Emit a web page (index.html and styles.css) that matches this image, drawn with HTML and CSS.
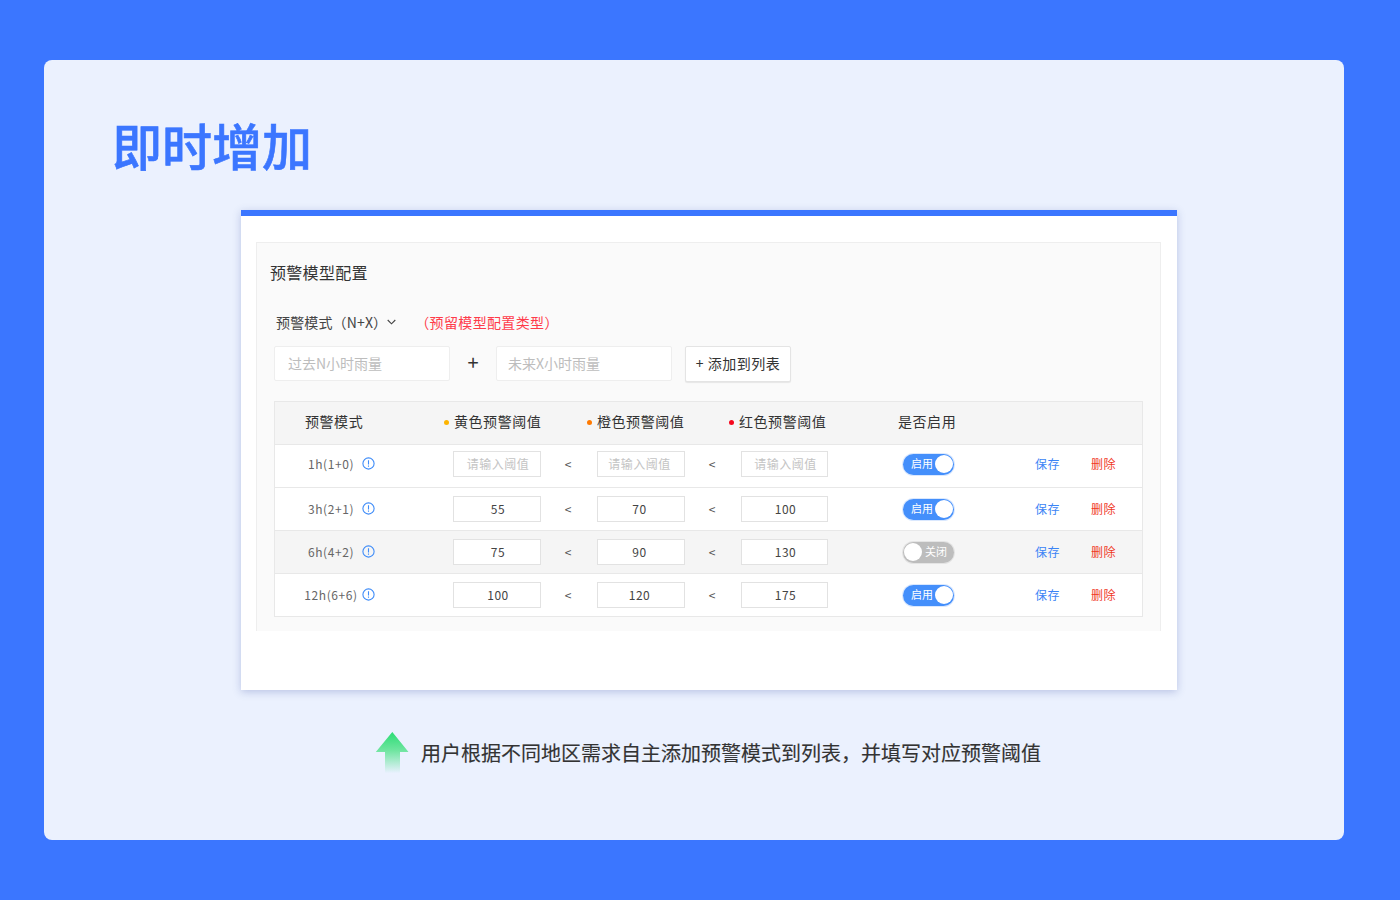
FILE: index.html
```html
<!DOCTYPE html>
<html lang="zh">
<head>
<meta charset="utf-8">
<title>即时增加</title>
<link rel="stylesheet" href="styles.css">
</head>
<body>
<main class="card">
  <h1 class="title">即时增加</h1>
  <section class="shot">
    <div class="panel">
      <h2 class="panel-title">预警模型配置</h2>
      <div class="mode-line">
        <span class="mode-select">预警模式（N+X）</span>
        <svg class="chev" width="9" height="6" viewBox="0 0 9 6"><path d="M.7 1l3.800 3.800L8.300 1" fill="none" stroke="#444" stroke-width="1.1"/></svg>
        <span class="mode-note">（预留模型配置类型）</span>
      </div>
      <div class="add-line">
        <div class="field">过去N小时雨量</div>
        <span class="plus">+</span>
        <div class="field field-x">未来X小时雨量</div>
        <button class="add-btn">+ 添加到列表</button>
      </div>
      <div class="table">
        <div class="thead">
          <span class="th-mode">预警模式</span>
          <span class="th"><i class="dot dot-y"></i>黄色预警阈值</span>
          <span class="th"><i class="dot dot-o"></i>橙色预警阈值</span>
          <span class="th"><i class="dot dot-r"></i>红色预警阈值</span>
          <span class="th">是否启用</span>
        </div>
        <div class="row row-first">
          <div class="mode"><span>1h(1+0)</span><svg class="info" viewBox="0 0 13 13"><circle cx="6.5" cy="6.5" r="5.6"/><path d="M6.5 3.2v4.2M6.5 8.6v1.2"/></svg></div>
          <div class="inp ph">请输入阈值</div><span class="lt">&lt;</span>
          <div class="inp ph">请输入阈值</div><span class="lt">&lt;</span>
          <div class="inp ph">请输入阈值</div>
          <div class="sw on"><span>启用</span><b></b></div>
          <a class="save">保存</a><a class="del">删除</a>
        </div>
        <div class="row">
          <div class="mode"><span>3h(2+1)</span><svg class="info" viewBox="0 0 13 13"><circle cx="6.5" cy="6.5" r="5.6"/><path d="M6.5 3.2v4.2M6.5 8.6v1.2"/></svg></div>
          <div class="inp">55</div><span class="lt">&lt;</span>
          <div class="inp">70</div><span class="lt">&lt;</span>
          <div class="inp">100</div>
          <div class="sw on"><span>启用</span><b></b></div>
          <a class="save">保存</a><a class="del">删除</a>
        </div>
        <div class="row row-off">
          <div class="mode"><span>6h(4+2)</span><svg class="info" viewBox="0 0 13 13"><circle cx="6.5" cy="6.5" r="5.6"/><path d="M6.5 3.2v4.2M6.5 8.6v1.2"/></svg></div>
          <div class="inp">75</div><span class="lt">&lt;</span>
          <div class="inp">90</div><span class="lt">&lt;</span>
          <div class="inp">130</div>
          <div class="sw off"><b></b><span>关闭</span></div>
          <a class="save">保存</a><a class="del">删除</a>
        </div>
        <div class="row">
          <div class="mode"><span>12h(6+6)</span><svg class="info" viewBox="0 0 13 13"><circle cx="6.5" cy="6.5" r="5.6"/><path d="M6.5 3.2v4.2M6.5 8.6v1.2"/></svg></div>
          <div class="inp">100</div><span class="lt">&lt;</span>
          <div class="inp">120</div><span class="lt">&lt;</span>
          <div class="inp">175</div>
          <div class="sw on"><span>启用</span><b></b></div>
          <a class="save">保存</a><a class="del">删除</a>
        </div>
      </div>
    </div>
  </section>
  <div class="caption">
    <svg class="arrow" width="34" height="42" viewBox="0 0 34 42">
      <defs><linearGradient id="ag" x1="0" y1="0" x2="0" y2="1"><stop offset="0" stop-color="#2bdc74"/><stop offset="0.45" stop-color="#6fe5a0"/><stop offset="1" stop-color="#e9f1fe"/></linearGradient></defs>
      <path d="M17.300 0L33.500 20H25V41H10V20H.8Z" fill="url(#ag)"/>
    </svg>
    <p>用户根据不同地区需求自主添加预警模式到列表，并填写对应预警阈值</p>
  </div>
</main>
</body>
</html>
```

FILE: styles.css
```css
* { box-sizing: border-box; }
html, body { margin: 0; height: 100%; }
body {
  width: 1400px; height: 900px; overflow: hidden;
  background: #3b76ff;
  padding: 60px 56px 60px 44px;
  font-family: "Noto Sans CJK SC", "Noto Sans", sans-serif;
  color: #333;
}
.card {
  width: 1300px; height: 780px;
  background: #ebf1fe;
  border-radius: 8px;
  padding-top: 47px;
}
.title {
  margin: 0 0 0 68px;
  font-size: 50px; line-height: 74px; font-weight: 500;
  -webkit-text-stroke: .6px #3b76ff;
  color: #3b76ff;
}
.shot {
  margin: 29px 0 0 197px;
  width: 936px; height: 480px;
  background: #fff;
  border-top: 6px solid #3b76ff;
  box-shadow: 0 2px 8px rgba(70, 90, 170, .3);
  padding: 26px 16px 0 15px;
}
.panel {
  height: 389px;
  background: #fafafa;
  border: 1px solid #eee;
  border-bottom: 0;
  padding: 0 17px;
}
.panel-title {
  margin: 0 0 0 -4px;
  padding-top: 17px;
  font-size: 16px; line-height: 24px; font-weight: 400;
  letter-spacing: .3px; color: #333;
}
.mode-line {
  display: flex; align-items: center;
  margin: 27px 0 0 2px; height: 22px;
  font-size: 14px; color: #444;
}
.mode-note { color: #ff3b4a; margin-left: 19px; letter-spacing: .35px; }
.chev { margin-left: 0; }
.mode-select { white-space: nowrap; letter-spacing: .15px; }
.add-line { display: flex; align-items: flex-start; margin-top: 13px; height: 36px; }
.field {
  width: 176px; height: 35px;
  background: #fff; border: 1px solid #eee; border-radius: 2px;
  padding-left: 13px;
  font-size: 14px; line-height: 33px; color: #bdbdbd;
}
.field-x { padding-left: 11px; }
.plus { width: 46px; text-align: center; font-size: 20px; line-height: 32px; color: #333; }
.add-btn {
  margin-left: 13px;
  width: 106px; height: 36px;
  background: #fff; border: 1px solid #e4e4e4; border-radius: 2px;
  font: 14px "Noto Sans CJK SC", sans-serif; letter-spacing: .5px; color: #333; padding: 0 0 2px;
  box-shadow: 0 1px 1px rgba(0,0,0,.08);
}
.table {
  margin-top: 19px;
  width: 869px; height: 216px;
  border: 1px solid #e8e8e8;
  background: #fff;
}
.thead {
  display: grid;
  grid-template-columns: 139px 143px 142px 169px auto;
  padding: 0 0 5px 30px;
  align-items: center;
  height: 42px;
  background: #f5f5f5;
  font-size: 14px; letter-spacing: .55px; color: #333;
}
.th { white-space: nowrap; }
.dot { display: inline-block; width: 5px; height: 5px; border-radius: 50%; margin-right: 5px; vertical-align: 2px; }
.dot-y { background: #fdb400; }
.dot-o { background: #ff7a00; }
.dot-r { background: #f5071d; }
.row {
  display: grid;
  grid-template-columns: 178px 88px 56px 88px 56px 87px 75px 51px 81px 25px 31px 26px;
  align-items: center;
  height: 43px;
  border-top: 1px solid #e8e8e8;
  font-size: 12px; color: #666;
}
.row-first { padding-bottom: 4px; }
.row-off { background: #f5f5f5; }
.mode { display: flex; align-items: center; padding-left: 25px; margin-bottom: 2px; letter-spacing: .6px; color: #666; }
.mode span { width: 62px; text-align: center; white-space: nowrap; }
.info { width: 13px; height: 13px; flex: none; fill: none; stroke: #3f8cf8; stroke-width: 1.1; }
.inp {
  height: 26px;
  background: #fff; border: 1px solid #e2e2e2;
  text-align: center; line-height: 24px; letter-spacing: .5px; color: #444;
}
.inp:nth-of-type(2) { padding-left: 2px; }
.inp:nth-of-type(3) { padding-right: 3px; }
.inp:nth-of-type(4) { padding-left: 2px; }
.ph { color: #c4c4c4; }
.lt { text-align: center; color: #555; padding-right: 2px; margin-bottom: 2px; }
.sw {
  grid-column: 8;
  width: 51px; height: 21px; border-radius: 11px;
  display: flex; align-items: center; justify-content: space-between;
  font-size: 11px; color: #fff;
  box-shadow: 0 0 0 1px rgba(70,140,250,.2);
}
.sw b { width: 18px; height: 18px; border-radius: 50%; background: #fff; flex: none; }
.sw.on { background: #448ffb; padding: 0 1px 0 8px; }
.sw.off { background: #bdbdbd; padding: 0 7px 0 1px; box-shadow: 0 0 0 1px #e4e4e4; }
.sw span { white-space: nowrap; margin-bottom: 2px; }
.save { grid-column: 10; color: #3b84f5; white-space: nowrap; letter-spacing: .4px; margin-bottom: 2px; }
.del { grid-column: 12; color: #f0391f; white-space: nowrap; letter-spacing: .4px; margin-bottom: 2px; }
.caption { display: flex; align-items: flex-start; margin: 42px 0 0 331px; height: 44px; }
.arrow { flex: none; margin-right: 12px; }
.caption p { margin: 0; font-size: 20px; line-height: 42px; font-weight: 400; -webkit-text-stroke: .15px #333; color: #333; white-space: nowrap; }
```
